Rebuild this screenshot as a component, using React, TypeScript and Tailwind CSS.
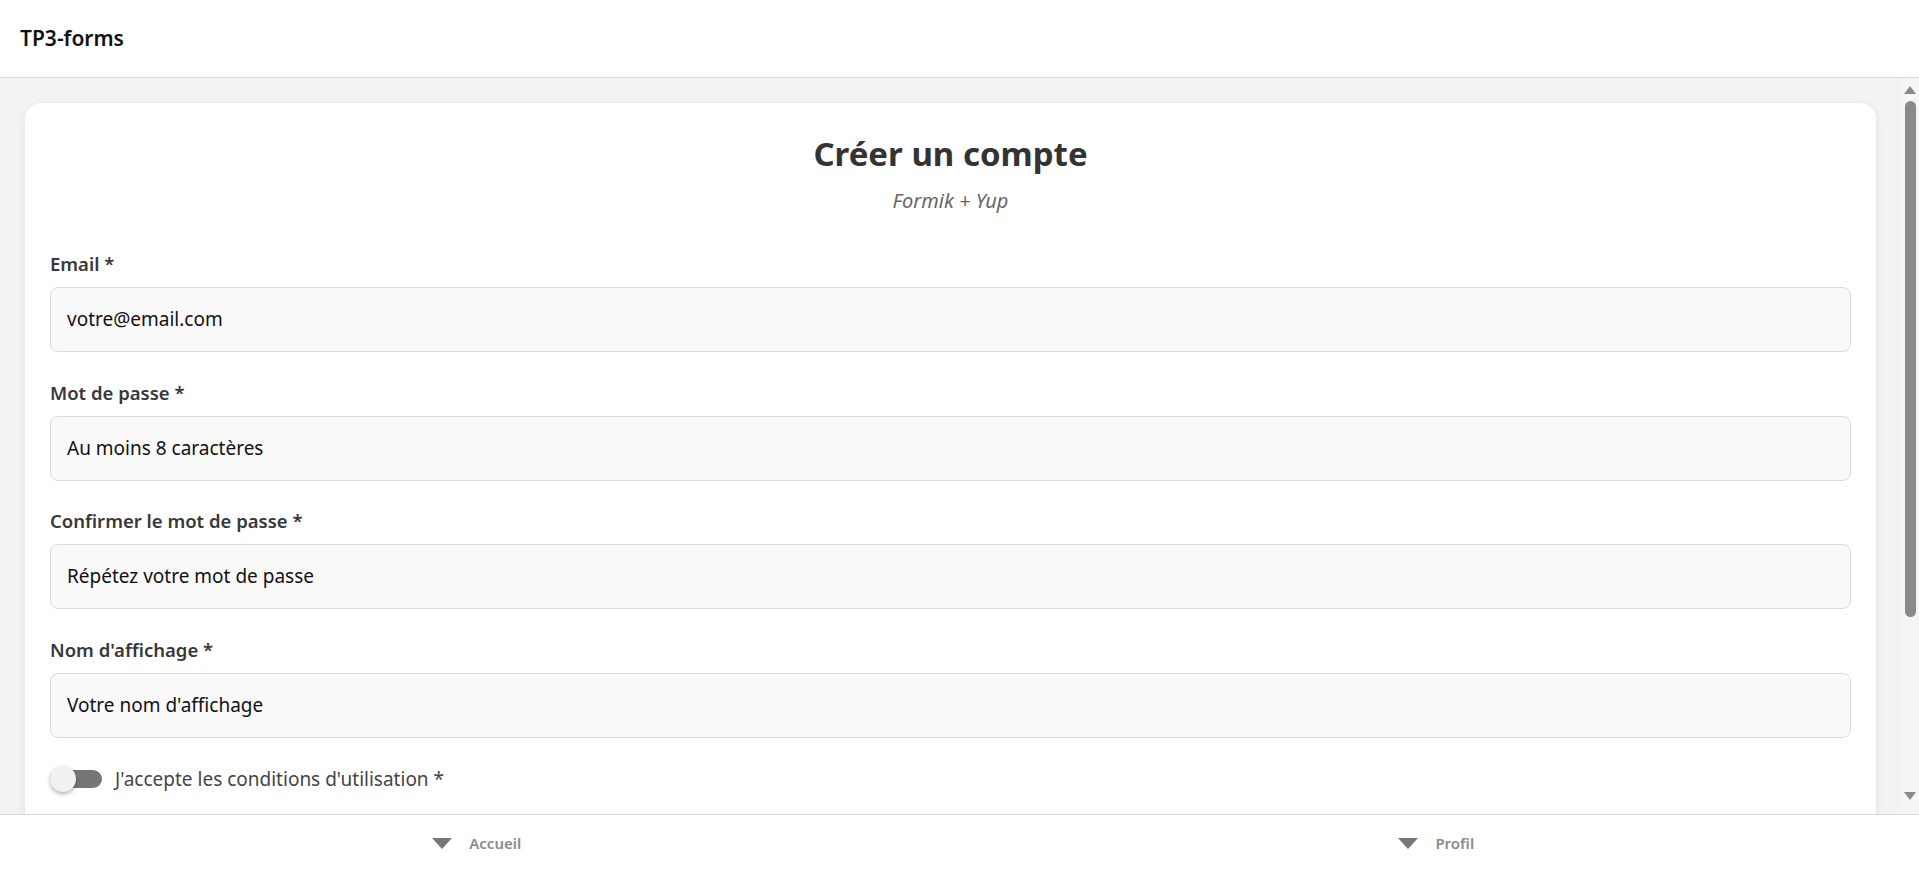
import React from "react";

const font = { fontFamily: '"Noto Sans", "Open Sans", sans-serif' };

function Field({ label, placeholder }: { label: string; placeholder: string }) {
  return (
    <div className="flex flex-col mb-[29.5px]">
      <label className="text-[18.5px] leading-[22px] font-semibold text-[#383838] mb-[12px]">{label}</label>
      <div className="h-[65px] rounded-[8px] border border-[#dcdcdc] bg-[#f9f9f9] flex items-center px-[16px] text-[19px] text-[#111]">
        {placeholder}
      </div>
    </div>
  );
}

function Tri({ up }: { up?: boolean }) {
  return (
    <svg width="12" height="8" viewBox="0 0 12 8">
      {up ? <polygon points="6,0 12,8 0,8" fill="#8a8a8a" /> : <polygon points="0,0 12,0 6,8" fill="#8a8a8a" />}
    </svg>
  );
}

export default function App() {
  return (
    <div className="h-screen w-full flex flex-col bg-white overflow-hidden" style={font}>
      <header className="h-[78px] shrink-0 border-b border-[#d9d9d9] flex items-center px-[20px]">
        <span className="text-[21px] font-semibold text-[#111]">TP3-forms</span>
      </header>
      <div className="flex-1 flex min-h-0 bg-[#f3f3f3]">
        <div className="flex-1 overflow-hidden pt-[25px] pl-[25px] pr-[25px]">
          <div className="bg-white rounded-[16px] shadow-[0_2px_8px_rgba(0,0,0,0.08)] px-[25px] pt-[30px] pb-[30px]">
            <h1 className="text-center text-[33px] leading-[41px] font-bold text-[#333]">Créer un compte</h1>
            <p className="text-center text-[20px] leading-[23px] italic text-[#666] mt-[15px] mb-[41px]">Formik + Yup</p>
            <Field label="Email *" placeholder="votre@email.com" />
            <Field label="Mot de passe *" placeholder="Au moins 8 caractères" />
            <Field label="Confirmer le mot de passe *" placeholder="Répétez votre mot de passe" />
            <Field label="Nom d'affichage *" placeholder="Votre nom d'affichage" />
            <div className="flex items-center -mt-[2.5px]">
              <div className="relative w-[52px] h-[26px] flex items-center">
                <div className="w-[52px] h-[18px] rounded-full bg-[#767676]" />
                <div className="absolute left-0 top-0 w-[26px] h-[26px] rounded-full bg-[#f1f1f1] shadow-[0_2px_4px_rgba(0,0,0,0.3)]" />
              </div>
              <span className="ml-[13px] text-[19px] text-[#444]">J'accepte les conditions d'utilisation *</span>
            </div>
            <div className="h-[200px]" />
          </div>
        </div>
        <div className="w-[18px] shrink-0 flex flex-col items-center bg-[#f5f5f5]">
          <div className="h-[20px] flex items-end pb-[4px]"><Tri up /></div>
          <div className="w-[11px] h-[516px] rounded-full bg-[#8a8a8a] mt-[3px]" />
          <div className="flex-1" />
          <div className="h-[20px] flex items-start pt-[2px] mb-[4px]"><Tri /></div>
        </div>
      </div>
      <nav className="h-[55px] shrink-0 border-t border-[#d9d9d9] bg-white flex">
        <div className="flex-1 flex items-center justify-center gap-[17px] pr-[6px] pt-[3px]">
          <svg width="20" height="11" viewBox="0 0 20 11"><polygon points="0,0 20,0 10,11" fill="#777" /></svg>
          <span className="text-[15px] font-semibold text-[#8a8a8a]">Accueil</span>
        </div>
        <div className="flex-1 flex items-center justify-center gap-[17px] pr-[6px] pt-[3px]">
          <svg width="20" height="11" viewBox="0 0 20 11"><polygon points="0,0 20,0 10,11" fill="#777" /></svg>
          <span className="text-[15px] font-semibold text-[#8a8a8a]">Profil</span>
        </div>
      </nav>
    </div>
  );
}
